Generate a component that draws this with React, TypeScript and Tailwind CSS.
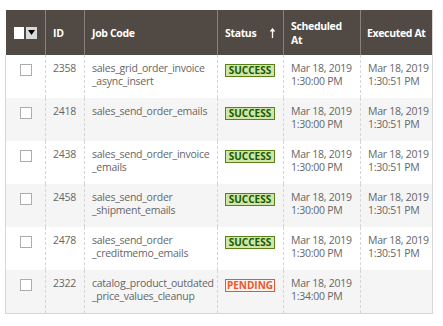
const rows = [
  { id: '2358', code: ['sales_grid_order_invoice', '_async_insert'], status: 'success', scheduled: ['Mar 18, 2019', '1:30:00 PM'], executed: ['Mar 18, 2019', '1:30:51 PM'] },
  { id: '2418', code: ['sales_send_order_emails'], status: 'success', scheduled: ['Mar 18, 2019', '1:30:00 PM'], executed: ['Mar 18, 2019', '1:30:51 PM'] },
  { id: '2438', code: ['sales_send_order_invoice', '_emails'], status: 'success', scheduled: ['Mar 18, 2019', '1:30:00 PM'], executed: ['Mar 18, 2019', '1:30:51 PM'] },
  { id: '2458', code: ['sales_send_order', '_shipment_emails'], status: 'success', scheduled: ['Mar 18, 2019', '1:30:00 PM'], executed: ['Mar 18, 2019', '1:30:51 PM'] },
  { id: '2478', code: ['sales_send_order', '_creditmemo_emails'], status: 'success', scheduled: ['Mar 18, 2019', '1:30:00 PM'], executed: ['Mar 18, 2019', '1:30:51 PM'] },
  { id: '2322', code: ['catalog_product_outdated', '_price_values_cleanup'], status: 'pending', scheduled: ['Mar 18, 2019', '1:34:00 PM'], executed: [] as string[] },
]

export default function App() {
  return (
    <div className="min-h-screen bg-white pl-[5px] pt-[10px]" style={{ fontFamily: '"Open Sans", sans-serif' }}>
      <div className="w-[428px] overflow-hidden border-r border-b border-[#d6d6d6]">
        <table className="w-[428px] table-fixed border-collapse text-[10.5px] tracking-[-0.25px]">
          <thead>
            <tr className="h-[45px] bg-[#514943] text-left text-[10.5px] font-bold leading-[14px] tracking-[-0.35px] text-white">
              <th className="w-[40px] px-2 align-middle">
                <div className="flex items-center">
                  <span className="block h-[12px] w-[11px] bg-white" />
                  <span className="ml-[2px] flex h-[12px] w-[11px] items-center justify-center bg-[#d9d9d9]">
                    <svg width="7" height="5" viewBox="0 0 7 5"><path d="M0 0h7L3.5 5z" fill="#000" /></svg>
                  </span>
                </div>
              </th>
              <th className="w-[39px] border-l border-[#8a817b] px-[7px]">ID</th>
              <th className="w-[133px] border-l border-[#8a817b] px-[7px]">Job Code</th>
              <th className="w-[66px] border-l border-[#8a817b] px-[7px]">
                <div className="flex w-full items-center justify-between">
                  <span>Status</span>
                  <svg className="mr-[1px]" width="5" height="10" viewBox="0 0 5 10">
                    <path d="M2.5 1v9M0.5 3.5L2.5 1l2 2.5" stroke="#fff" strokeWidth="1.3" fill="none" />
                  </svg>
                </div>
              </th>
              <th className="w-[77px] border-l border-[#8a817b] px-[7px]">Scheduled At</th>
              <th className="w-[73px] whitespace-nowrap border-l border-[#8a817b] px-[6px]">Executed At</th>
            </tr>
          </thead>
          <tbody className="leading-[13px] text-[#666]">
            {rows.map((row, i) => (
              <tr key={row.id} className={`h-[43px] ${i % 2 ? 'bg-[#f5f5f5]' : 'bg-white'}`}>
                <td className="border-l border-[#d6d6d6] align-top">
                  <div className="flex justify-center pt-[9px]">
                    <span className="block h-[12px] w-[12px] border border-[#adadad] bg-white" />
                  </div>
                </td>
                <td className="border-l border-dashed border-[#d6d6d6] px-[7px] pt-[7px] align-top">{row.id}</td>
                <td className="border-l border-dashed border-[#d6d6d6] px-[7px] pt-[7px] align-top">
                  {row.code.map((line) => (
                    <div key={line} className="whitespace-nowrap">{line}</div>
                  ))}
                </td>
                <td className="border-l border-dashed border-[#d6d6d6] px-[7px] pt-[9px] align-top">
                  <StatusBadge status={row.status} />
                </td>
                <td className="border-l border-dashed border-[#d6d6d6] px-[7px] pt-[7px] align-top">
                  {row.scheduled.map((line) => (
                    <div key={line} className="whitespace-nowrap">{line}</div>
                  ))}
                </td>
                <td className="border-l border-dashed border-[#d6d6d6] px-[7px] pt-[7px] align-top">
                  {row.executed.map((line) => (
                    <div key={line} className="whitespace-nowrap">{line}</div>
                  ))}
                </td>
              </tr>
            ))}
          </tbody>
        </table>
      </div>
    </div>
  )
}

function StatusBadge({ status }: { status: string }) {
  if (status === 'success') {
    return (
      <span className="block h-[13px] w-[50px] border border-[#5b8116] bg-[#d0e5a9] text-center text-[10px] font-bold leading-[11px] tracking-[0px] text-[#185b00]">
        SUCCESS
      </span>
    )
  }
  return (
    <span className="block h-[13px] w-[50px] border border-[#e9572f] bg-[#fff1ee] text-center text-[10px] font-bold leading-[11px] tracking-[0px] text-[#e9572f]">
      PENDING
    </span>
  )
}
